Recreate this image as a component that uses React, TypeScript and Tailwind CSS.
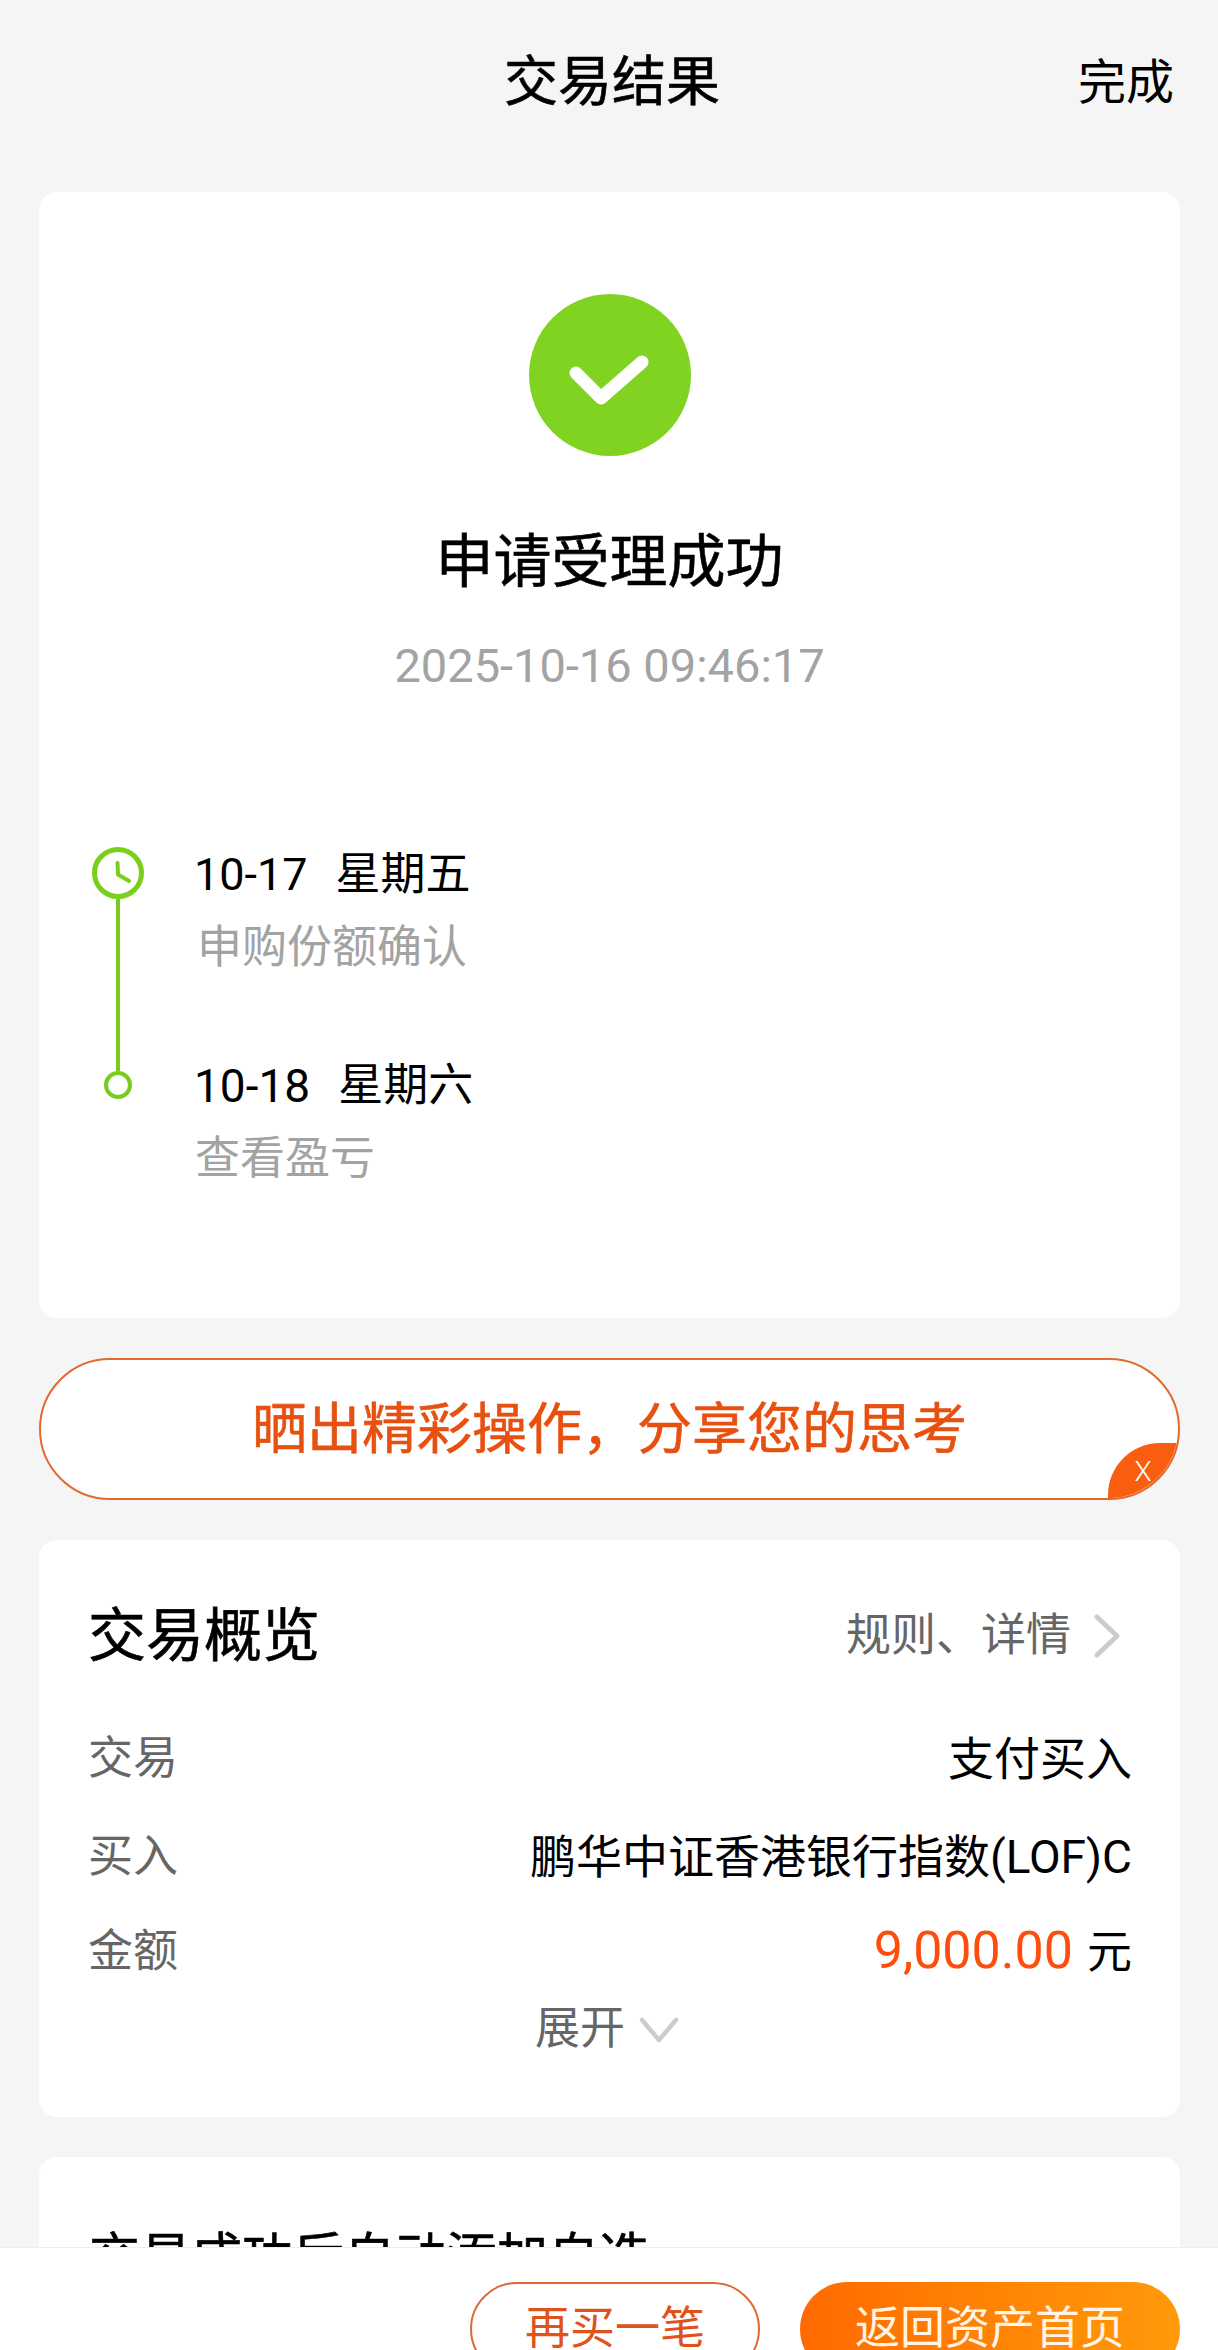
const F = "font-['Roboto','Noto_Sans_CJK_SC',sans-serif]";
const HEAVY = "font-normal [-webkit-text-stroke:0.6px_currentColor]";

function Row({ label, children, className }: { label: string; children: React.ReactNode; className: string }) {
  return (
    <div className={`flex items-center justify-between h-[60px] leading-[60px] ${className}`}>
      <span className="text-[45px] text-[#666666]">{label}</span>
      <span className="text-[46px] text-black">{children}</span>
    </div>
  );
}

export default function App() {
  return (
    <div className={`relative h-[2350px] w-[1218px] overflow-hidden bg-[#f5f5f5] ${F}`}>
      <header className="grid h-[165px] grid-cols-[1fr_auto_1fr] items-center pl-[50px] pr-[44px]">
        <span />
        <h1 className={`text-[54px] leading-[70px] text-black ${HEAVY}`}>交易结果</h1>
        <span className="justify-self-end text-[48px] leading-[70px] text-black">完成</span>
      </header>

      <main className="mt-[27px] ml-[39px] w-[1141px]">
        <section className="flex flex-col rounded-[18px] bg-white pt-[102px] pb-[129px]">
          <div className="mx-auto h-[162px] w-[162px] rounded-full bg-[#80d321]">
            <svg viewBox="0 0 162 162" className="h-full w-full" fill="none">
              <polyline points="47,79 72,104 113,68" stroke="white" strokeWidth="13" strokeLinecap="round" strokeLinejoin="round" />
            </svg>
          </div>
          <h2 className={`mt-[66px] text-center text-[58px] leading-[80px] text-black ${HEAVY}`}>申请受理成功</h2>
          <p className="mt-[34px] text-center text-[47px] leading-[60px] text-[#a3a3a3]">2025-10-16 09:46:17</p>

          <div className="mt-[147px] flex pl-[53px]">
            <div className="flex flex-col items-center pt-[4px]">
              <svg viewBox="0 0 52 52" className="h-[52px] w-[52px]" fill="none">
                <circle cx="26" cy="26" r="23.5" stroke="#78d01c" strokeWidth="5" />
                <polyline points="25.5,16 26,27.5 37,34" stroke="#78d01c" strokeWidth="4" strokeLinecap="round" strokeLinejoin="round" />
              </svg>
              <div className="h-[172px] w-[4px] bg-[#78cc1e]" />
              <div className="h-[28px] w-[28px] rounded-full border-[4px] border-[#78cc1e] bg-white" />
            </div>
            <div className="ml-[50px] flex flex-col">
              <div className="mt-[2px] flex h-[60px] items-center leading-[60px] text-black">
                <span className="text-[45px]">10-17</span>
                <span className="ml-[28px] text-[45px]">星期五</span>
              </div>
              <div className="mt-[13px] pl-[3px] text-[45px] leading-[60px] text-[#a3a3a3]">申购份额确认</div>
              <div className="mt-[78px] flex h-[60px] items-center leading-[60px] text-black">
                <span className="text-[46px]">10-18</span>
                <span className="ml-[28px] text-[45px]">星期六</span>
              </div>
              <div className="mt-[13px] pl-[1px] text-[45px] leading-[60px] text-[#a3a3a3]">查看盈亏</div>
            </div>
          </div>
        </section>

        <button className={`relative mt-[40px] flex h-[142px] w-full items-center justify-center overflow-hidden rounded-[71px] border-2 border-[#e26a2c] bg-white text-[55px] text-[#e8500f] ${HEAVY}`}>
          晒出精彩操作，分享您的思考
          <span className="absolute bottom-0 right-0 flex h-[55px] w-[70px] items-center justify-center rounded-tl-[52px] bg-[#f95e10] pt-[2px] text-[28px] font-light text-white [-webkit-text-stroke:0px]">
            X
          </span>
        </button>

        <section className="mt-[40px] rounded-[18px] bg-white pl-[49px] pr-[48px] pt-[61px] pb-[58px]">
          <div className="flex h-[70px] items-center justify-between">
            <h3 className={`text-[58px] leading-[70px] text-black ${HEAVY}`}>交易概览</h3>
            <div className="flex items-center pr-[11px]">
              <span className="text-[45px] leading-[60px] text-[#666666]">规则、详情</span>
              <svg viewBox="0 0 28 44" fill="none" className="ml-[22px] h-[44px] w-[28px]">
                <polyline points="4,3 24,22 4,41" stroke="#cccccc" strokeWidth="5" strokeLinecap="round" strokeLinejoin="round" />
              </svg>
            </div>
          </div>
          <Row label="交易" className="mt-[58px]">支付买入</Row>
          <Row label="买入" className="mt-[38px]">鹏华中证香港银行指数(LOF)C</Row>
          <Row label="金额" className="mt-[35px]">
            <span className="text-[52px] text-[#ff4d0d]">9,000.00</span>
            <span className="ml-[14px] text-[45px]">元</span>
          </Row>
          <div className="mt-[17px] flex h-[60px] items-center justify-center pr-[6px]">
            <span className="text-[45px] leading-[60px] text-[#666666]">展开</span>
            <svg viewBox="0 0 40 26" fill="none" className="ml-[14px] mt-[2px] h-[26px] w-[40px]">
              <polyline points="3,3 20,23 37,3" stroke="#cccccc" strokeWidth="4.5" strokeLinecap="round" strokeLinejoin="round" />
            </svg>
          </div>
        </section>

        <section className="mt-[40px] h-[300px] rounded-[18px] bg-white px-[50px] pt-[71px]">
          <p className={`text-[51px] leading-[60px] text-black ${HEAVY}`}>交易成功后自动添加自选</p>
        </section>
      </main>

      <footer className="absolute bottom-0 left-0 flex h-[103px] w-full items-start justify-end gap-[40px] overflow-hidden border-t border-[#eeeeee] bg-white pt-[34px] pr-[38px]">
        <button className="flex h-[94px] w-[290px] items-center justify-center rounded-[47px] border-2 border-[#dc6a38] bg-white text-[45px] text-[#e0521c]">
          再买一笔
        </button>
        <button className="flex h-[94px] w-[380px] items-center justify-center rounded-[47px] bg-gradient-to-r from-[#ff6a00] to-[#ff9a0a] text-[45px] text-[#fff4e6]">
          返回资产首页
        </button>
      </footer>
    </div>
  );
}
